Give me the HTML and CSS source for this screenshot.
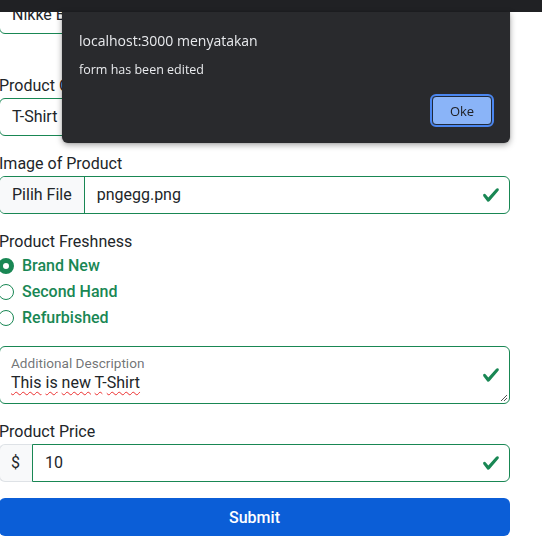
FILE: index.html
```html
<!DOCTYPE html>
<html lang="id">
<head>
<meta charset="utf-8">
<title>Product Form</title>
<link rel="stylesheet" href="styles.css">
</head>
<body>
<form class="form">
  <div class="field first">
    <div class="control valid"><span class="value">Nikke Basic Tee</span></div>
  </div>

  <div class="field">
    <label class="label">Product Category</label>
    <div class="control valid select"><span class="value">T-Shirt</span></div>
  </div>

  <div class="field">
    <label class="label">Image of Product</label>
    <div class="control valid file">
      <span class="file-btn">Pilih File</span>
      <span class="value">pngegg.png</span>
    </div>
  </div>

  <div class="field radios-field">
    <label class="label">Product Freshness</label>
    <div class="radios">
      <div class="check"><span class="radio checked"></span><span class="check-label">Brand New</span></div>
      <div class="check"><span class="radio"></span><span class="check-label">Second Hand</span></div>
      <div class="check"><span class="radio"></span><span class="check-label">Refurbished</span></div>
    </div>
  </div>

  <div class="field">
    <div class="textarea valid">
      <span class="float-label">Additional Description</span>
      <span class="value"><span class="typo">This</span> <span class="typo">is</span> <span class="typo">new</span> <span class="typo">T</span>-<span class="typo">Shirt</span></span>
      <svg class="grip" width="8" height="8" viewBox="0 0 8 8"><path d="M7 1 1 7M7 4 4 7" stroke="#555" stroke-width="1"/></svg>
    </div>
  </div>

  <div class="field">
    <label class="label">Product Price</label>
    <div class="group">
      <span class="addon">$</span>
      <div class="control valid grow"><span class="value">10</span></div>
    </div>
  </div>

  <button type="button" class="submit">Submit</button>
</form>

<div class="topbar"></div>
<div class="dialog">
  <div class="dialog-title">localhost:3000 menyatakan</div>
  <div class="dialog-msg">form has been edited</div>
  <div class="dialog-actions"><button type="button" class="ok">Oke</button></div>
</div>
</body>
</html>
```

FILE: styles.css
```css
html, body {
  margin: 0;
  padding: 0;
  background: #fff;
  overflow: hidden;
}
body {
  font-family: Roboto, "Liberation Sans", sans-serif;
  font-size: 16px;
  line-height: 24px;
  color: #212529;
}
.form {
  width: 511px;
  margin: -4px 0 0 -1px;
  display: flex;
  flex-direction: column;
}
.field { margin-bottom: 16px; }
.field.first { margin-bottom: 40px; }
.label { display: block; height: 24px; }

.control {
  box-sizing: border-box;
  height: 38px;
  border: 1px solid #dee2e6;
  border-radius: 6px;
  padding: 6px 12px;
  display: flex;
  align-items: center;
  background: #fff no-repeat;
}
.control.valid, .textarea.valid {
  border-color: #198754;
  background-image: url("data:image/svg+xml,%3csvg xmlns='http://www.w3.org/2000/svg' viewBox='0 0 8 8'%3e%3cpath fill='%23198754' d='M2.3 6.73.6 4.53c-.4-1.04.46-1.4 1.1-.8l1.1 1.4 3.4-3.8c.6-.63 1.6-.27 1.2.7l-4 4.6c-.43.5-.8.4-1.1.1z'/%3e%3c/svg%3e");
  background-size: 18px 18px;
  background-position: right 9px center;
  background-repeat: no-repeat;
}
.file { padding-left: 0; }
.file-btn {
  align-self: stretch;
  display: flex;
  align-items: center;
  padding: 0 12px;
  margin: -6px 12px -6px 0;
  background: #f8f9fa;
  border-right: 1px solid #198754;
  border-radius: 5px 0 0 5px;
}

.radios { margin-left: -1px; margin-bottom: -2px; }
.check {
  display: flex;
  align-items: center;
  height: 24px;
  margin-bottom: 2px;
}
.radio {
  box-sizing: border-box;
  width: 16px;
  height: 16px;
  border: 1px solid #198754;
  border-radius: 50%;
  margin-right: 8px;
  background: #fff;
}
.radio.checked {
  border: 5px solid #198754;
}
.check-label { color: #198754; font-weight: 500; }

.textarea {
  box-sizing: border-box;
  position: relative;
  height: 58px;
  border: 1px solid #198754;
  border-radius: 6px;
  padding: 6px 12px 0 11px;
  display: flex;
  flex-direction: column;
  background-position: right 9px top 9px;
}
.float-label {
  font-size: 13.6px;
  line-height: 20px;
  color: rgba(33, 37, 41, 0.65);
}
.value { white-space: nowrap; }
.textarea .value { line-height: 20px; }
.typo {
  text-decoration: underline wavy #ec2f2f;
  text-decoration-thickness: 1px;
  text-underline-offset: 3px;
  text-decoration-skip-ink: none;
}
.grip { position: absolute; right: 1px; bottom: 1px; }

.group { display: flex; }
.addon {
  box-sizing: border-box;
  height: 38px;
  width: 33px;
  padding: 6px 11px;
  background: #f8f9fa;
  border: 1px solid #dee2e6;
  border-right: 0;
  border-radius: 6px 0 0 6px;
}
.grow { flex: 1; border-radius: 0 6px 6px 0; }

.submit {
  height: 38px;
  width: 100%;
  border: 0;
  border-radius: 6px;
  background: #0b5ed7;
  color: #fff;
  font-family: Roboto, sans-serif;
  font-size: 16px;
  font-weight: 500;
}

.topbar {
  position: fixed;
  left: 0; top: 0;
  width: 100%;
  height: 12px;
  background: #202124;
}
.dialog {
  position: fixed;
  left: 62px;
  top: 12px;
  width: 448px;
  height: 131px;
  box-sizing: border-box;
  background: #292a2d;
  border-radius: 0 0 6px 6px;
  box-shadow: 0 2px 6px rgba(0, 0, 0, 0.35), 0 0 2px rgba(0, 0, 0, 0.2);
  padding: 17px 16px 0 17px;
  color: #e8eaed;
  font-family: "Open Sans", "Noto Sans", sans-serif;
}
.dialog-title { font-size: 14px; line-height: 24px; }
.dialog-msg { font-size: 12.5px; line-height: 18px; margin-top: 8px; }
.dialog-actions { display: flex; justify-content: flex-end; margin-top: 17px; }
.ok {
  box-sizing: border-box;
  width: 60px;
  height: 29px;
  margin-right: 2px;
  background: #8ab4f8;
  border: 1px solid #1f2a3b;
  border-radius: 4px;
  outline: 2px solid #4a86f0;
  color: #202124;
  font-family: "Open Sans", "Noto Sans", sans-serif;
  font-size: 13px;
  padding: 0;
}
```
